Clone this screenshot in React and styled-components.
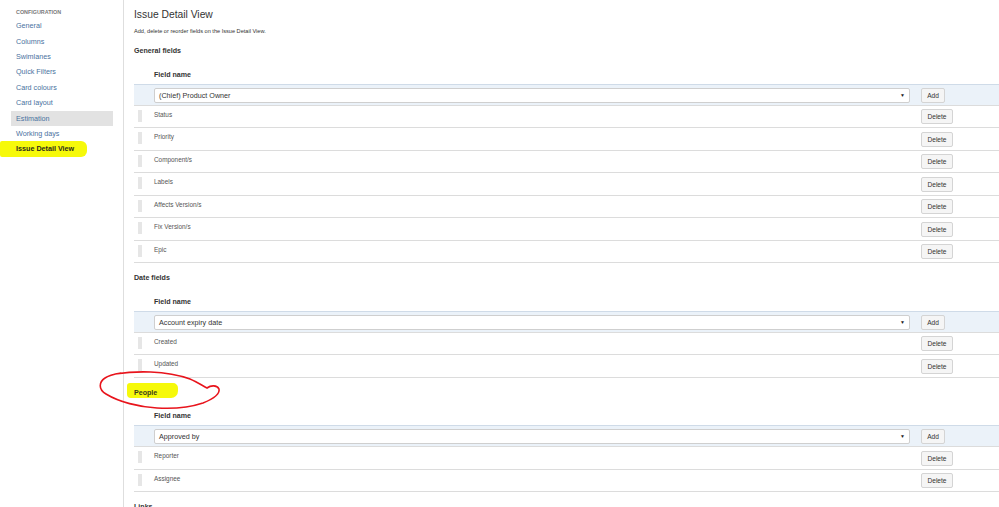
// absolute imports
import React from 'react';
import styled, { createGlobalStyle } from 'styled-components';

// global styles
const GlobalStyle = createGlobalStyle`
    html, body {
        margin: 0;
        padding: 0;
        background: #fff;
        overflow: hidden;
    }
    body {
        font-family: "Liberation Sans", Arial, sans-serif;
        color: #333;
    }
`;

// data
const NAV_ITEMS = [
    'General',
    'Columns',
    'Swimlanes',
    'Quick Filters',
    'Card colours',
    'Card layout',
    'Estimation',
    'Working days',
    'Issue Detail View',
];

const SECTIONS = [
    {
        title: 'General fields',
        selected: '(Chief) Product Owner',
        fields: ['Status', 'Priority', 'Component/s', 'Labels', 'Affects Version/s', 'Fix Version/s', 'Epic'],
    },
    {
        title: 'Date fields',
        selected: 'Account expiry date',
        fields: ['Created', 'Updated'],
    },
    {
        title: 'People',
        marked: true,
        selected: 'Approved by',
        fields: ['Reporter', 'Assignee'],
    },
    {
        title: 'Links',
        selected: '',
        fields: [],
    },
];

// styled components
const Page = styled.div`
    position: relative;
    display: flex;
    height: 507px;
    overflow: hidden;
`;

const Sidebar = styled.nav`
    width: 124px;
    flex-shrink: 0;
    border-right: 1px solid #dedede;
    padding-top: 7px;
    box-sizing: border-box;
`;

const NavHeading = styled.div`
    padding-left: 16px;
    font-size: 5.4px;
    line-height: 10px;
    font-weight: bold;
    color: #7a7a7a;
    text-transform: uppercase;
    margin-bottom: 1.3px;
`;

const NavItem = styled.div`
    height: 15.4px;
    line-height: 15.4px;
    font-size: 7.2px;
    box-sizing: border-box;
    margin-left: ${p => (p.$marked ? 0 : 11)}px;
    padding-left: ${p => (p.$marked ? 16 : 5)}px;
    width: ${p => (p.$marked ? 87 : 102)}px;
    color: ${p => (p.$marked ? '#2b2b1a' : '#4a72a0')};
    font-weight: ${p => (p.$marked ? 'bold' : 'normal')};
    background: ${p => (p.$marked ? '#f6f90a' : p.$active ? '#e2e2e2' : 'transparent')};
    border-radius: ${p => (p.$marked ? '2px 6px 6px 2px' : '0')};
    white-space: nowrap;
`;

const Main = styled.main`
    flex: 1;
    padding: 8px 0 0 10px;
    min-width: 0;
`;

const Title = styled.h1`
    margin: 0;
    font-size: 10.3px;
    line-height: 14px;
    font-weight: normal;
    color: #333;
`;

const Description = styled.p`
    margin: 4px 0 0;
    font-size: 5.6px;
    line-height: 10px;
    color: #333;
`;

const SectionHeading = styled.h3`
    margin: 10px 0 0;
    font-size: 7.1px;
    line-height: 10px;
    font-weight: bold;
    color: #333;
`;

const Mark = styled.span`
    display: inline-block;
    background: #f6f90a;
    margin: -5px 0 0 -7px;
    padding: 5px 21px 0 7px;
    border-radius: 3px 5px 7px 4px;
    color: #3a3a1a;
`;

const Table = styled.div`
    margin-top: 9.5px;
`;

const Row = styled.div`
    display: flex;
    align-items: flex-start;
    height: ${p => (p.$head ? 18 : p.$add ? 22 : 22.5)}px;
    box-sizing: border-box;
    background: ${p => (p.$add ? '#ebf2f9' : 'transparent')};
    border-top: ${p => (p.$add ? '1px solid #cfdbe8' : 'none')};
    border-bottom: ${p => (p.$head ? 'none' : '1px solid #dcdcdc')};
`;

const HandleCell = styled.div`
    width: 20px;
    flex-shrink: 0;
    padding: 4px 0 0 4px;
    box-sizing: border-box;
`;

const Handle = styled.div`
    width: 4px;
    height: 12px;
    background: #e6e6e6;
`;

const NameCell = styled.div`
    flex: 1;
    min-width: 0;
    padding: ${p => (p.$add ? '3px 5px 0 0' : p.$head ? '0' : '4px 0 0')};
    font-size: ${p => (p.$head ? 7.1 : 6.4)}px;
    line-height: ${p => (p.$head ? 18 : 9)}px;
    font-weight: ${p => (p.$head ? 'bold' : 'normal')};
    color: ${p => (p.$head ? '#333' : '#555')};
`;

const ActionCell = styled.div`
    display: flex;
    align-items: flex-start;
    width: 84px;
    flex-shrink: 0;
    padding: ${p => (p.$add ? '3px' : '3.5px')} 0 0 6px;
    box-sizing: border-box;
`;

const Select = styled.div`
    display: flex;
    align-items: center;
    justify-content: space-between;
    height: 15px;
    box-sizing: border-box;
    padding: 0 4px;
    border: 1px solid #cfcfcf;
    border-radius: 2px;
    background: #fff;
    font-size: 7.2px;
    color: #333;
`;

const Caret = styled.span`
    font-size: 5px;
    color: #222;
`;

const Button = styled.button`
    display: block;
    height: 15px;
    width: ${p => p.$w}px;
    padding: 0;
    border: 1px solid #d4d4d4;
    border-radius: 2px;
    background: #f5f5f5;
    font-family: "Liberation Sans", Arial, sans-serif;
    font-size: 6.6px;
    line-height: 13px;
    color: #333;
`;

const Scribble = styled.svg`
    position: absolute;
    left: 95px;
    top: 365px;
    width: 135px;
    height: 50px;
    overflow: visible;
    pointer-events: none;
`;

// presentational components
const Section = ({ section }) => (
    <>
        <SectionHeading>
            {section.marked ? <Mark>{section.title}</Mark> : section.title}
        </SectionHeading>
        {section.fields.length > 0 && (
            <Table>
                <Row $head>
                    <HandleCell />
                    <NameCell $head>Field name</NameCell>
                </Row>
                <Row $add>
                    <HandleCell />
                    <NameCell $add>
                        <Select>
                            <span>{section.selected}</span>
                            <Caret>▼</Caret>
                        </Select>
                    </NameCell>
                    <ActionCell $add>
                        <Button $w={24}>Add</Button>
                    </ActionCell>
                </Row>
                {section.fields.map(field => (
                    <Row key={field}>
                        <HandleCell>
                            <Handle />
                        </HandleCell>
                        <NameCell>{field}</NameCell>
                        <ActionCell>
                            <Button $w={32}>Delete</Button>
                        </ActionCell>
                    </Row>
                ))}
            </Table>
        )}
    </>
);

// container components
export default function App() {
    return (
        <Page>
            <GlobalStyle />
            <Sidebar>
                <NavHeading>Configuration</NavHeading>
                {NAV_ITEMS.map(item => (
                    <NavItem
                        key={item}
                        $active={item === 'Estimation'}
                        $marked={item === 'Issue Detail View'}
                    >
                        {item}
                    </NavItem>
                ))}
            </Sidebar>
            <Main>
                <Title>Issue Detail View</Title>
                <Description>Add, delete or reorder fields on the Issue Detail View.</Description>
                {SECTIONS.map(section => (
                    <Section key={section.title} section={section} />
                ))}
            </Main>
            <Scribble viewBox="0 0 135 50">
                <path
                    d="M20 9 C40 6 70 5 95 14 C102 17 108 21 112 23 C116 20 122 20 124 24 C125 29 118 34 108 38 C96 42 78 44 62 43 C44 42 24 37 11 29 C3 24 4 17 10 13 C14 10 20 9 26 8"
                    fill="none"
                    stroke="#e8141c"
                    strokeWidth="1.6"
                    strokeLinecap="round"
                />
            </Scribble>
        </Page>
    );
}
